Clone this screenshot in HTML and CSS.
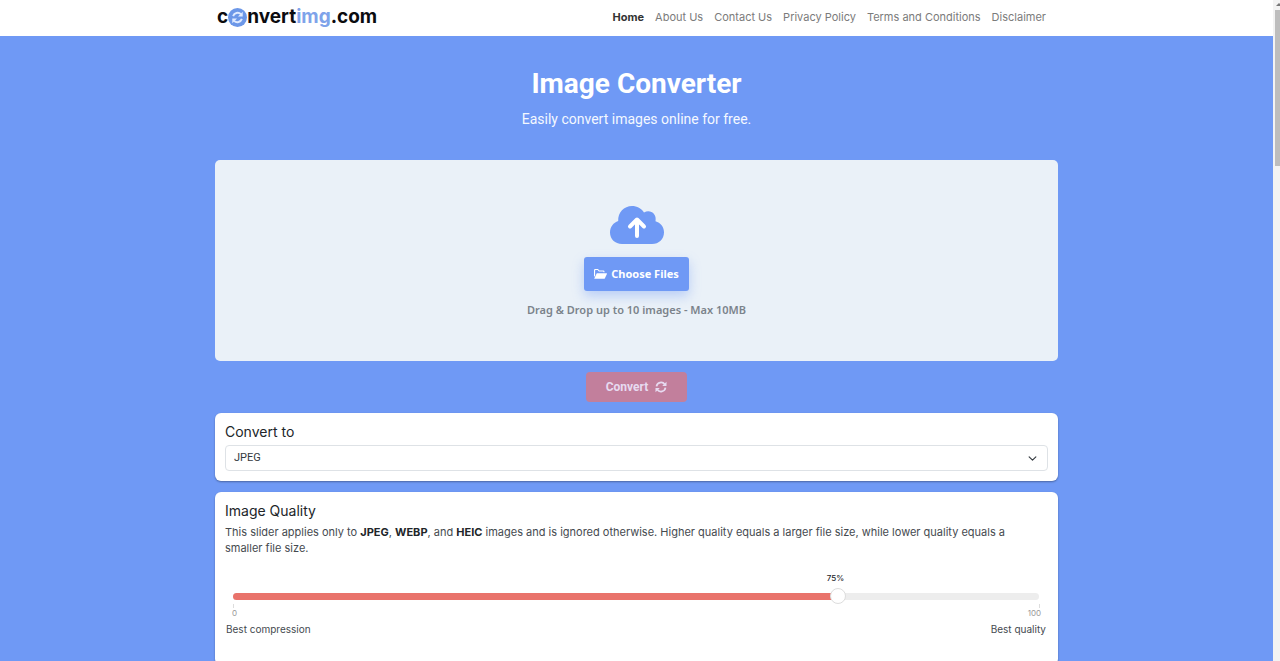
FILE: index.html
```html
<!DOCTYPE html>
<html lang="en">
<head>
<meta charset="utf-8">
<meta name="viewport" content="width=device-width, initial-scale=1">
<title>Image Converter - convertimg.com</title>
<link rel="stylesheet" href="styles.css">
</head>
<body>
<header class="site-header">
  <div class="container header-row">
    <a class="logo" href="#" aria-label="convertimg.com">
      <span>c</span>
      <svg class="logo-icon" viewBox="0 0 20 20" aria-hidden="true">
        <circle cx="10" cy="10" r="10" fill="#6c97e8"/>
        <g fill="none" stroke="#dfeaff" stroke-width="2">
          <path d="M5.400 8.500A5 5 0 0 1 13.600 6.500"/>
          <path d="M14.600 11.500A5 5 0 0 1 6.400 13.500"/>
        </g>
        <path fill="#dfeaff" d="M15.500 4v5h-5zM4.500 16v-5h5z"/>
      </svg>
      <span>nvert<span class="logo-accent">img</span>.com</span>
    </a>
    <nav class="nav">
      <a class="active" href="#">Home</a>
      <a href="#">About Us</a>
      <a href="#">Contact Us</a>
      <a href="#">Privacy Policy</a>
      <a href="#">Terms and Conditions</a>
      <a href="#">Disclaimer</a>
    </nav>
  </div>
</header>
<main class="container">
  <h1>Image Converter</h1>
  <p class="lead">Easily convert images online for free.</p>
  <section class="dropzone">
    <svg class="cloud" viewBox="0 0 54 38" aria-hidden="true">
      <path fill="#6f99f5" d="M12 38C5 38 0 33 0 26.500C0 21 3.500 16.500 8.200 15C7.800 6.500 14 0 22 0C27 0 31.500 2.500 34 6.500C40 3 47 7.500 45.500 15.200C50.500 16.500 54 21 54 26.200C54 33 49 38 42 38Z"/>
      <path fill="none" stroke="#fff" stroke-width="4" stroke-linecap="round" stroke-linejoin="round" d="M27 30V14M20 20.500L27 13.500L34 20.500"/>
    </svg>
    <button class="choose" type="button">
      <svg class="folder" viewBox="0 0 13 10" aria-hidden="true">
        <path fill="#fff" d="M0 8V1.200Q0 0 1.200 0H4L5.300 1.400H9.300Q10.500 1.400 10.500 2.600V3.300H9.500V2.900Q9.500 2.400 9 2.400H4.900L3.600 1.100H1.600Q1.100 1.100 1.100 1.600V6.600ZM2.800 4.200H12.400Q13.200 4.200 12.900 4.900L10.900 9.200Q10.600 9.800 10 9.800H.7Q.1 9.800 .4 9.200Z"/>
      </svg>
      Choose Files
    </button>
    <p class="hint">Drag &amp; Drop up to 10 images - Max 10MB</p>
  </section>
  <button class="convert" type="button" disabled>
    Convert
    <svg class="sync" viewBox="0 0 12 12" aria-hidden="true">
      <path fill="none" stroke="currentColor" stroke-width="1.700" d="M1.500 5.300A4.600 4.600 0 0 1 9.800 3.400M10.500 6.700A4.600 4.600 0 0 1 2.200 8.600"/>
      <path fill="currentColor" d="M11.500 .7V5H7.200zM.5 11.300V7H4.800z"/>
    </svg>
  </button>
  <section class="card">
    <label class="card-title" for="format">Convert to</label>
    <select id="format" class="format">
      <option>JPEG</option>
      <option>PNG</option>
      <option>WEBP</option>
      <option>HEIC</option>
    </select>
  </section>
  <section class="card">
    <label class="card-title" for="quality">Image Quality</label>
    <p class="note">This slider applies only to <b>JPEG</b>, <b>WEBP</b>, and <b>HEIC</b> images and is ignored otherwise. Higher quality equals a larger file size, while lower quality equals a smaller file size.</p>
    <div class="slider">
      <div class="bar"><div class="fill" style="width: 75%"></div></div>
      <output class="bubble" for="quality" style="left: 75%">75%</output>
      <input id="quality" class="range" type="range" min="0" max="100" value="75">
    </div>
    <div class="scale"><span>0</span><span>100</span></div>
    <div class="captions"><span>Best compression</span><span>Best quality</span></div>
  </section>
</main>
<div class="scroll-rail" aria-hidden="true"><div class="scroll-thumb"></div></div>
</body>
</html>
```
FILE: styles.css
```css
* { box-sizing: border-box; }
body {
  margin: 0;
  padding-right: 7px;
  background: #6f99f5;
  color: #212529;
  font: 11px/16px Inter, "Liberation Sans", sans-serif;
}
h1, p { margin: 0; }
button, select, input { font: inherit; }
.container { width: 100%; max-width: 843px; margin: 0 auto; }
.site-header { background: #fff; }
.header-row {
  display: flex;
  align-items: center;
  justify-content: space-between;
  min-height: 36px;
  padding: 0 12px 2px 2px;
}
.logo {
  display: flex;
  align-items: center;
  color: #0b0b0f;
  font-size: 19px;
  font-weight: 700;
  line-height: 24px;
  text-decoration: none;
}
.logo-icon { width: 19px; height: 19px; }
.logo-accent { color: #7fa3ea; }
.nav { display: flex; gap: 11px; }
.nav a { color: #7b7b7b; text-decoration: none; }
.nav .active { color: #333; font-weight: 700; }
main { display: flex; flex-direction: column; align-items: center; padding: 30px 0; }
h1 { color: #fff; font: 700 28px/36px Roboto, sans-serif; }
.lead { margin-top: 7px; color: #f4f8ff; font: 14px/20px Roboto, sans-serif; }
.dropzone {
  display: flex;
  flex-direction: column;
  align-items: center;
  width: 100%;
  margin-top: 31px;
  padding: 46px 0 43px;
  border-radius: 5px;
  background: #eaf1f8;
}
.cloud { width: 54px; height: 38px; }
.choose {
  display: flex;
  align-items: center;
  gap: 4px;
  height: 34px;
  margin-top: 13px;
  padding: 0 10px;
  border: 0;
  border-radius: 3px;
  background: #6f99f5;
  box-shadow: 0 5px 12px #6f99f566;
  color: #fff;
  font: 700 11px/16px "Noto Sans", sans-serif;
}
.folder { width: 13px; height: 10px; }
.hint { margin-top: 10px; color: #7b838b; font: 600 11px/17px "Noto Sans", sans-serif; }
.convert {
  display: flex;
  align-items: center;
  justify-content: center;
  gap: 7px;
  width: 101px;
  height: 30px;
  margin-top: 11px;
  border: 0;
  border-radius: 4px;
  background: #c27f9c;
  color: #e7daf0;
  font: 700 12px/16px Roboto, sans-serif;
}
.sync { width: 12px; height: 12px; }
.card {
  width: 100%;
  margin-top: 11px;
  padding: 10px;
  border-radius: 6px;
  background: #fff;
  box-shadow: 0 1px 2px #00000055;
}
.card-title { display: block; font-size: 14px; line-height: 18px; }
.format {
  display: block;
  width: 100%;
  height: 26px;
  margin-top: 4px;
  padding: 0 8px;
  appearance: none;
  border: 1px solid #dee2e6;
  border-radius: 4px;
  background: #fff url("data:image/svg+xml,%3Csvg xmlns='http://www.w3.org/2000/svg' viewBox='0 0 16 16'%3E%3Cpath fill='none' stroke='%23343a40' stroke-linecap='round' stroke-linejoin='round' stroke-width='2' d='m2 5 6 6 6-6'/%3E%3C/svg%3E") no-repeat right 10px center / 9px;
  color: #343a40;
  font: 11px/16px Roboto, sans-serif;
}
.note { margin-top: 4px; padding-right: 24px; color: #454a4f; }
.note b { color: #212529; }
.slider { position: relative; display: grid; align-items: center; height: 16px; margin: 32px 9px 0 8px; }
.bar, .range { grid-area: 1 / 1; }
.bar { height: 7px; overflow: hidden; border-radius: 4px; background: #ededed; }
.fill { height: 100%; background: #e9736b; }
.bubble {
  position: absolute;
  bottom: 20px;
  transform: translateX(-50%);
  margin-left: -2px;
  font-size: 8px;
  line-height: 12px;
  font-weight: 500;
}
.range {
  width: calc(100% + 16px);
  height: 16px;
  margin: 0 -8px;
  appearance: none;
  background: transparent;
}
.range::-webkit-slider-thumb {
  width: 16px;
  height: 16px;
  appearance: none;
  border: 1px solid #ddd;
  border-radius: 50%;
  background: #fff;
}
.scale {
  display: flex;
  justify-content: space-between;
  margin: 0 7px;
  color: #999;
  font-size: 8px;
  line-height: 10px;
}
.scale span::before { content: ""; display: block; width: 1px; height: 4px; margin: 0 1px; background: #ddd; }
.scale span:last-child::before { margin-left: auto; }
.captions {
  display: flex;
  justify-content: space-between;
  padding: 3px 2px 18px 1px;
  color: #454a4f;
  font-size: 10px;
}
.scroll-rail { position: fixed; inset: 0 0 0 auto; width: 7px; padding: 10px 0 0 2px; background: #f3f3f3; }
.scroll-rail::before {
  content: "";
  position: absolute;
  top: 3px;
  left: 3px;
  border: solid transparent;
  border-width: 0 3px 3px;
  border-bottom-color: #777;
}
.scroll-thumb { height: 24%; background: #bdbdbd; }
```
